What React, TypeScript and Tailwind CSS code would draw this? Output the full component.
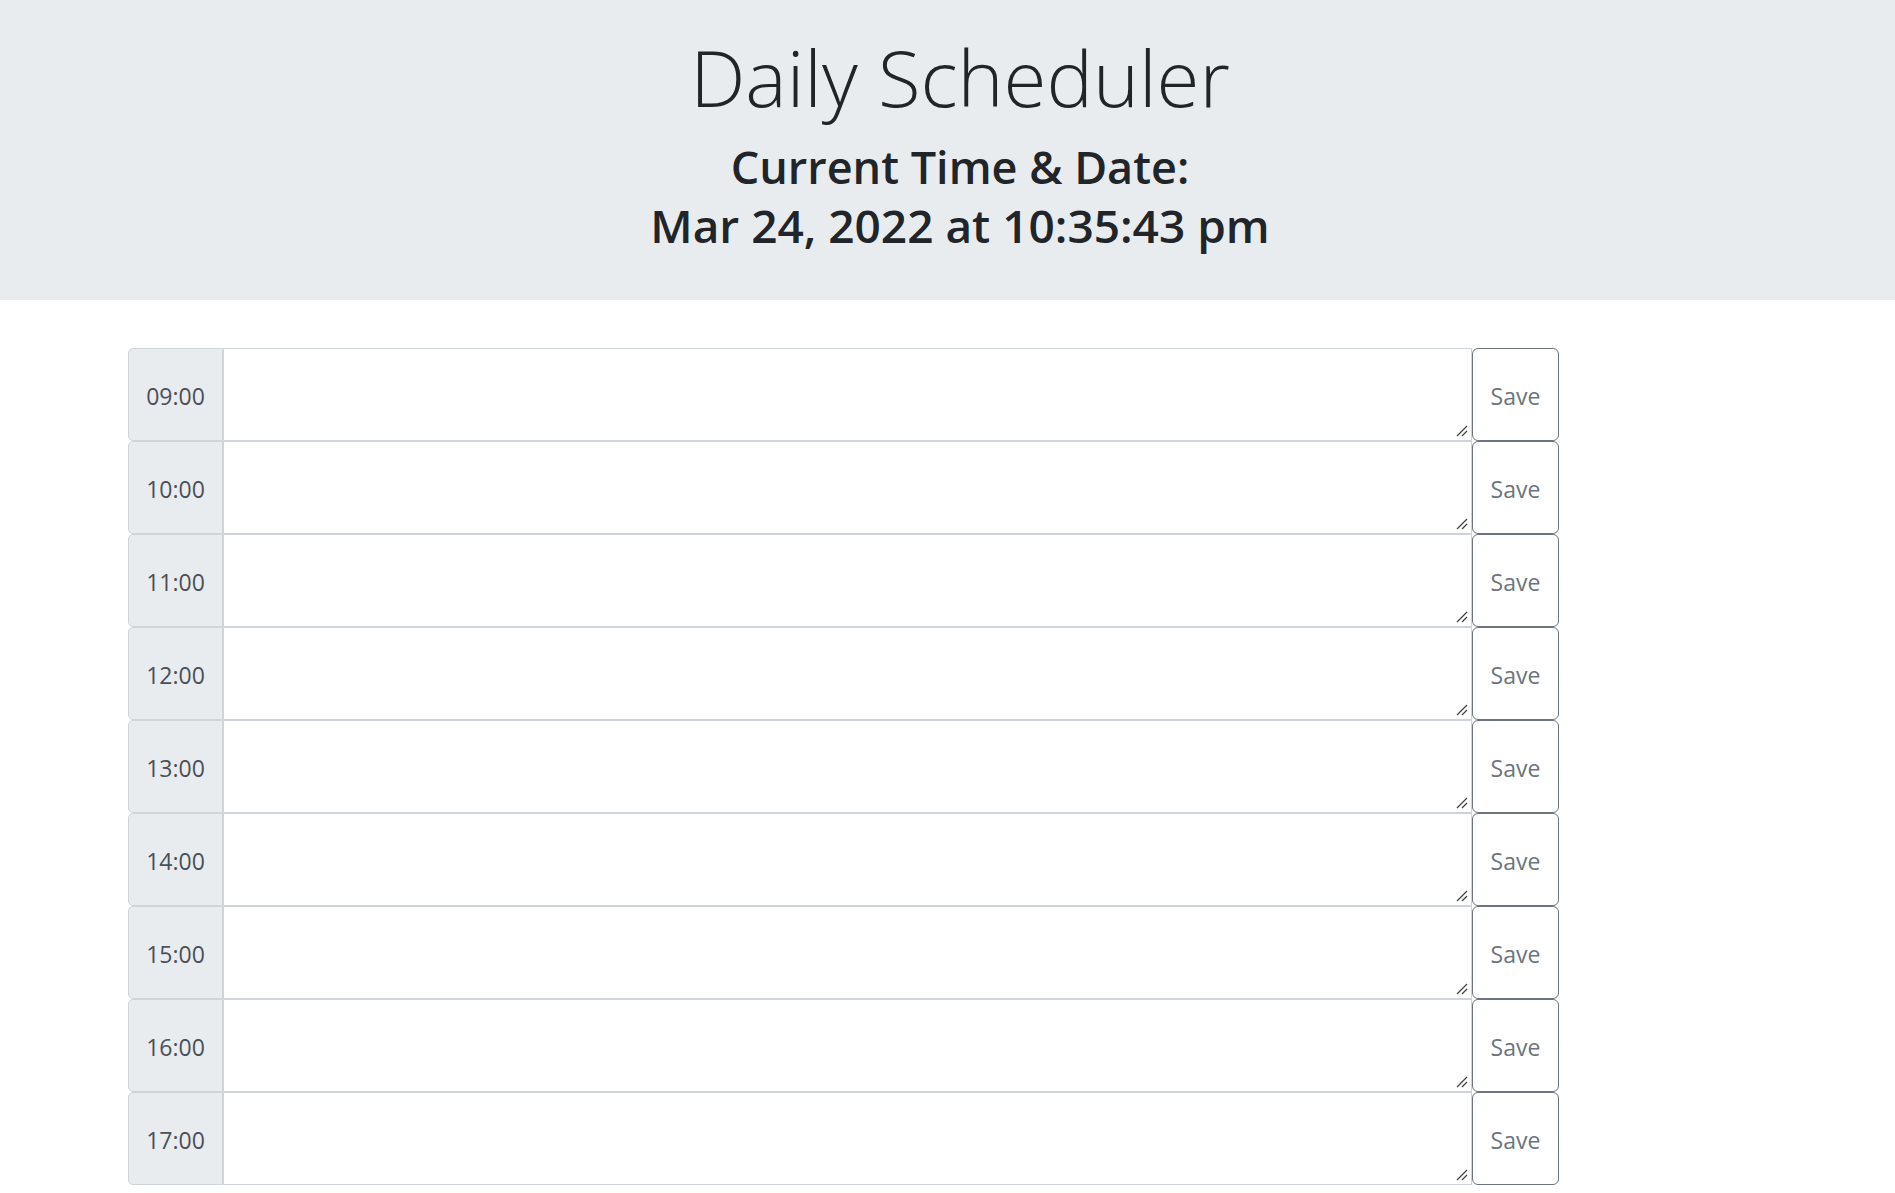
const hours = ['09:00', '10:00', '11:00', '12:00', '13:00', '14:00', '15:00', '16:00', '17:00'];

function HourRow({ hour }: { hour: string }) {
  return (
    <div className="flex h-[93px]">
      <div className="flex w-[95px] shrink-0 items-center justify-center rounded-l-[5px] border border-[#ced4da] bg-[#e9ecef] pt-[3px] text-[23px] text-[#495057]">
        {hour}
      </div>
      <div className="relative w-[1249px] shrink-0">
        <textarea className="block h-full w-full resize-none border border-[#ced4da] bg-white outline-none" />
        {/* resize grip */}
        <svg className="pointer-events-none absolute right-[4px] bottom-[4px]" width="12" height="12" viewBox="0 0 12 12">
          <path d="M1 11 L11 1 M6 11 L11 6" stroke="#444" strokeWidth="1.3" />
        </svg>
      </div>
      <button className="flex w-[87px] shrink-0 items-center justify-center rounded-[6px] border border-[#6c757d] bg-white pt-[3px] text-[23px] text-[#6c757d]">
        Save
      </button>
    </div>
  );
}

export default function App() {
  return (
    <div className="min-h-screen bg-white font-['Open_Sans',sans-serif] text-[#212529]">
      {/* Jumbotron header */}
      <header className="bg-[#e9ecef] pt-[29px] pb-[45px] pl-[25px] text-center">
        <h1 className="text-[78px] font-light leading-[96px]">Daily Scheduler</h1>
        <p className="mt-[12px] text-[45px] font-semibold leading-[59px]">Current Time &amp; Date:</p>
        <p className="text-[46px] font-semibold leading-[59px]">Mar 24, 2022 at 10:35:43 pm</p>
      </header>

      {/* Time blocks */}
      <main className="mt-[48px] pl-[128px]">
        {hours.map((h) => (
          <HourRow key={h} hour={h} />
        ))}
      </main>
    </div>
  );
}
